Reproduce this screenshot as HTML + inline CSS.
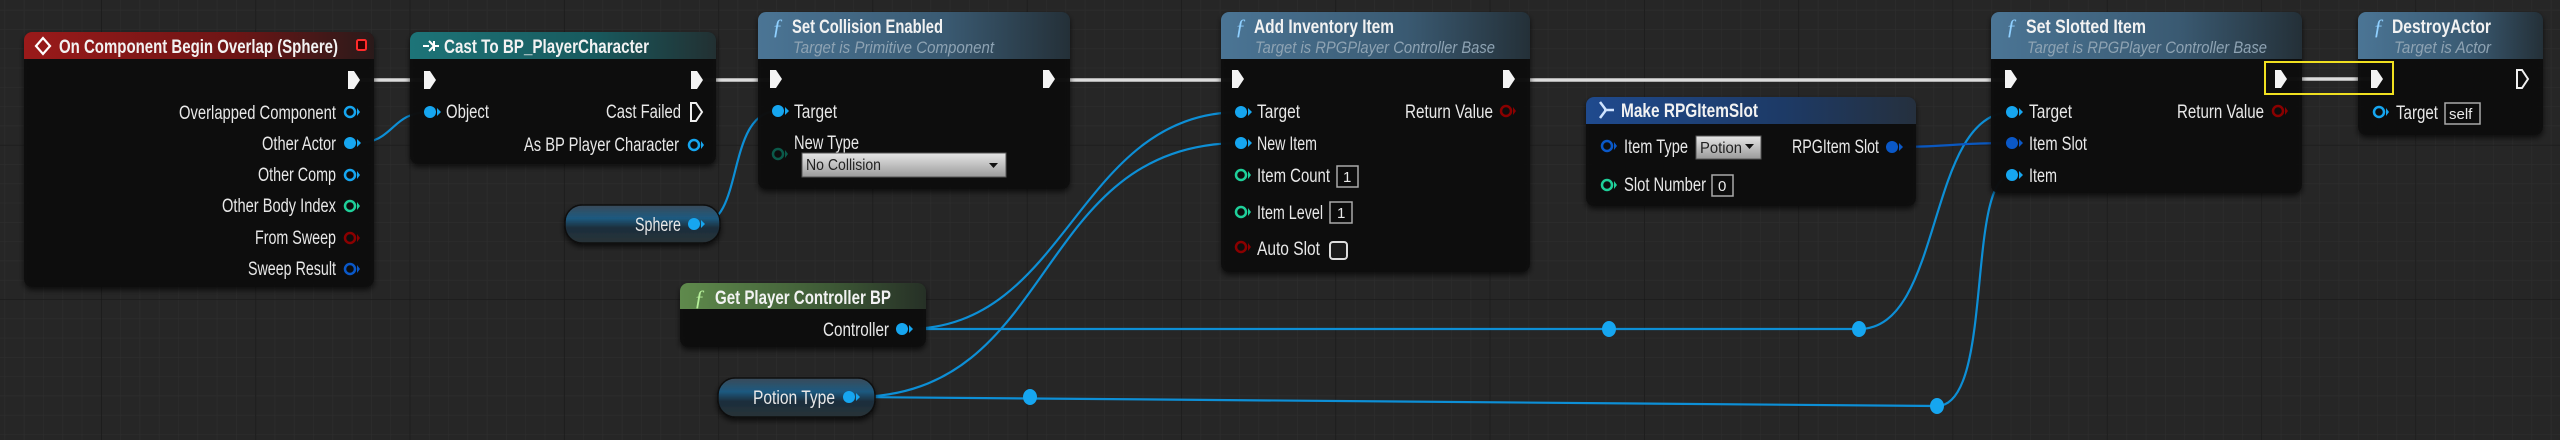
<!DOCTYPE html>
<html><head><meta charset="utf-8"><style>
html,body{margin:0;padding:0;background:#262626;width:2560px;height:440px;overflow:hidden}
svg{display:block}
text{font-family:"Liberation Sans",sans-serif;fill:#e8e8e8}
.t{font-size:19px}
.h{font-size:19px;font-weight:bold;fill:#f2f2f2}
.s{font-size:17px;font-style:italic;fill:#8ea3b3}
</style></head><body>
<svg width="2560" height="440" viewBox="0 0 2560 440" xmlns="http://www.w3.org/2000/svg">
<defs>
<pattern id="minor" x="101" y="-9.5" width="19.29" height="19.29" patternUnits="userSpaceOnUse">
<path d="M0 0V19.29M0 0H19.29" stroke="#2e2e2e" stroke-width="1.2" fill="none"/>
</pattern>
<pattern id="major" x="101" y="-9.5" width="154.3" height="154.3" patternUnits="userSpaceOnUse">
<path d="M0 0V154.3M0 0H154.3" stroke="#191919" stroke-width="1.5" fill="none"/>
</pattern>
<linearGradient id="gRed" x1="0" x2="1"><stop offset="0" stop-color="#9a1a1a"/><stop offset=".6" stop-color="#6e1515"/><stop offset="1" stop-color="#2a1a1a"/></linearGradient>
<linearGradient id="gTeal" x1="0" x2="1"><stop offset="0" stop-color="#1d7478"/><stop offset=".6" stop-color="#185a5e"/><stop offset="1" stop-color="#223032"/></linearGradient>
<linearGradient id="gBlue" x1="0" x2="1"><stop offset="0" stop-color="#4b7595"/><stop offset=".6" stop-color="#3a5a72"/><stop offset="1" stop-color="#243038"/></linearGradient>
<linearGradient id="gGreen" x1="0" x2="1"><stop offset="0" stop-color="#5f8a4c"/><stop offset=".6" stop-color="#3e5a36"/><stop offset="1" stop-color="#263026"/></linearGradient>
<linearGradient id="gNavy" x1="0" x2="1"><stop offset="0" stop-color="#1f4a8e"/><stop offset=".6" stop-color="#1d3a66"/><stop offset="1" stop-color="#25303e"/></linearGradient>
<linearGradient id="gVar" x1="0" x2="0" y1="0" y2="1"><stop offset="0" stop-color="#3a4a58"/><stop offset=".35" stop-color="#1d5a80"/><stop offset=".6" stop-color="#1a2e3c"/><stop offset="1" stop-color="#2a3238"/></linearGradient>
<linearGradient id="gCombo" x1="0" x2="0" y1="0" y2="1"><stop offset="0" stop-color="#e6e6e6"/><stop offset="1" stop-color="#9a9a9a"/></linearGradient>
<filter id="sh" x="-5%" y="-10%" width="110%" height="130%"><feDropShadow dx="0" dy="3" stdDeviation="3" flood-color="#000" flood-opacity=".7"/></filter>
</defs>
<rect width="2560" height="440" fill="#262626"/>
<rect width="2560" height="440" fill="url(#minor)"/>
<rect width="2560" height="440" fill="url(#major)"/>

<g fill="none" stroke-linecap="round">
<path d="M357 80H424M700 80H772M1053 80H1234M1513 80H2006M2285 79H2373" stroke="#dcdcdc" stroke-width="3.5"/>
<g stroke="#0d8fd6" stroke-width="2.2">
<path d="M357 143C395 143 390 112 430 112"/>
<path d="M700 224C745 224 725 111 778 111"/>
<path d="M907 329C1070 329 1075 112 1241 112"/>
<path d="M907 329H1859"/>
<path d="M1859 329C1945 329 1925 112 2012 112"/>
<path d="M854 397C1060 397 1030 143 1241 143"/>
<path d="M854 397L1937 406"/>
<path d="M1937 406C1995 406 1965 175 2012 175"/>
</g>
<path d="M1896 147C1950 147 1950 143 2012 143" stroke="#0a58c0" stroke-width="2.2"/>
</g>
<g fill="#16a6f0">
<ellipse cx="1030" cy="397" rx="7" ry="8"/><ellipse cx="1609" cy="329" rx="7" ry="8"/><ellipse cx="1859" cy="329" rx="7" ry="8"/><ellipse cx="1937" cy="406" rx="7" ry="8"/>
</g>

<g filter="url(#sh)"><rect x="24" y="32" width="350" height="255" rx="8" fill="#121212" fill-opacity=".95"/></g>
<path d="M32 32H366a8 8 0 0 1 8 8V59H24V40a8 8 0 0 1 8-8z" fill="url(#gRed)"/>
<path d="M43 38L36 46L43 54L50 46Z" fill="none" stroke="#fff" stroke-width="2.2"/>
<text class="h" x="59" y="53" textLength="279" lengthAdjust="spacingAndGlyphs">On Component Begin Overlap (Sphere)</text>
<rect x="357" y="40" width="9" height="10" rx="1.5" fill="#300" stroke="#ff2a2a" stroke-width="2"/>
<g class="t" text-anchor="end">
<text x="336" y="119" textLength="157" lengthAdjust="spacingAndGlyphs">Overlapped Component</text>
<text x="336" y="150" textLength="74" lengthAdjust="spacingAndGlyphs">Other Actor</text>
<text x="336" y="181" textLength="78" lengthAdjust="spacingAndGlyphs">Other Comp</text>
<text x="336" y="212" textLength="114" lengthAdjust="spacingAndGlyphs">Other Body Index</text>
<text x="336" y="244" textLength="81" lengthAdjust="spacingAndGlyphs">From Sweep</text>
<text x="336" y="275" textLength="88" lengthAdjust="spacingAndGlyphs">Sweep Result</text>
</g>

<g filter="url(#sh)"><rect x="410" y="32" width="306" height="132" rx="8" fill="#121212" fill-opacity=".95"/></g>
<path d="M418 32H708a8 8 0 0 1 8 8V59H410V40a8 8 0 0 1 8-8z" fill="url(#gTeal)"/>
<path d="M423 46h6M429 41l5 5-5 5M434 41v10M434 46h5" stroke="#fff" stroke-width="2" fill="none"/>
<text class="h" x="444" y="53" textLength="205" lengthAdjust="spacingAndGlyphs">Cast To BP_PlayerCharacter</text>
<text class="t" x="446" y="118" textLength="43" lengthAdjust="spacingAndGlyphs">Object</text>
<text class="t" x="681" y="118" text-anchor="end" textLength="75" lengthAdjust="spacingAndGlyphs">Cast Failed</text>
<text class="t" x="679" y="151" text-anchor="end" textLength="155" lengthAdjust="spacingAndGlyphs">As BP Player Character</text>

<g filter="url(#sh)"><rect x="565" y="205" width="155" height="38" rx="17" fill="url(#gVar)" stroke="#111" stroke-width="1.5"/></g>
<text class="t" x="681" y="231" text-anchor="end" textLength="46" lengthAdjust="spacingAndGlyphs">Sphere</text>

<g filter="url(#sh)"><rect x="758" y="12" width="312" height="177" rx="8" fill="#121212" fill-opacity=".95"/></g>
<path d="M766 12H1062a8 8 0 0 1 8 8V59H758V20a8 8 0 0 1 8-8z" fill="url(#gBlue)"/>
<text x="772" y="34" style="font-family:'Liberation Serif',serif;font-style:italic;font-size:22px;fill:#8fd0ff">ƒ</text>
<text class="h" x="792" y="33" textLength="151" lengthAdjust="spacingAndGlyphs">Set Collision Enabled</text>
<text class="s" x="793" y="53" textLength="201" lengthAdjust="spacingAndGlyphs">Target is Primitive Component</text>
<text class="t" x="794" y="118" textLength="43" lengthAdjust="spacingAndGlyphs">Target</text>
<text class="t" x="794" y="149" textLength="65" lengthAdjust="spacingAndGlyphs">New Type</text>
<rect x="802" y="153" width="204" height="24" fill="url(#gCombo)" stroke="#555"/>
<text x="806" y="170" textLength="75" lengthAdjust="spacingAndGlyphs" style="font-size:16px;fill:#222">No Collision</text>
<path d="M989 163h9l-4.5 5z" fill="#111"/>

<g filter="url(#sh)"><rect x="1221" y="12" width="309" height="260" rx="8" fill="#121212" fill-opacity=".95"/></g>
<path d="M1229 12H1522a8 8 0 0 1 8 8V59H1221V20a8 8 0 0 1 8-8z" fill="url(#gBlue)"/>
<text x="1235" y="34" style="font-family:'Liberation Serif',serif;font-style:italic;font-size:22px;fill:#8fd0ff">ƒ</text>
<text class="h" x="1254" y="33" textLength="140" lengthAdjust="spacingAndGlyphs">Add Inventory Item</text>
<text class="s" x="1255" y="53" textLength="240" lengthAdjust="spacingAndGlyphs">Target is RPGPlayer Controller Base</text>
<text class="t" x="1257" y="118" textLength="43" lengthAdjust="spacingAndGlyphs">Target</text>
<text class="t" x="1493" y="118" text-anchor="end" textLength="88" lengthAdjust="spacingAndGlyphs">Return Value</text>
<text class="t" x="1257" y="150" textLength="60" lengthAdjust="spacingAndGlyphs">New Item</text>
<text class="t" x="1257" y="182" textLength="73" lengthAdjust="spacingAndGlyphs">Item Count</text>
<rect x="1337" y="166" width="21" height="21" fill="#0c0c0c" stroke="#aaa" stroke-width="1.5"/>
<text x="1343" y="182" style="font-size:15px">1</text>
<text class="t" x="1257" y="219" textLength="66" lengthAdjust="spacingAndGlyphs">Item Level</text>
<rect x="1330" y="202" width="22" height="21" fill="#0c0c0c" stroke="#aaa" stroke-width="1.5"/>
<text x="1337" y="218" style="font-size:15px">1</text>
<text class="t" x="1257" y="255" textLength="63" lengthAdjust="spacingAndGlyphs">Auto Slot</text>
<rect x="1330" y="242" width="17" height="17" rx="3" fill="#1a1a1a" stroke="#ddd" stroke-width="2"/>

<g filter="url(#sh)"><rect x="680" y="283" width="246" height="64" rx="8" fill="#121212" fill-opacity=".95"/></g>
<path d="M688 283H918a8 8 0 0 1 8 8V309H680V291a8 8 0 0 1 8-8z" fill="url(#gGreen)"/>
<text x="694" y="305" style="font-family:'Liberation Serif',serif;font-style:italic;font-size:22px;fill:#b6f09a">ƒ</text>
<text class="h" x="715" y="304" textLength="176" lengthAdjust="spacingAndGlyphs">Get Player Controller BP</text>
<text class="t" x="889" y="336" text-anchor="end" textLength="66" lengthAdjust="spacingAndGlyphs">Controller</text>

<g filter="url(#sh)"><rect x="718" y="378" width="157" height="39" rx="17" fill="url(#gVar)" stroke="#111" stroke-width="1.5"/></g>
<text class="t" x="835" y="404" text-anchor="end" textLength="82" lengthAdjust="spacingAndGlyphs">Potion Type</text>

<g filter="url(#sh)"><rect x="1586" y="97" width="330" height="109" rx="8" fill="#121212" fill-opacity=".95"/></g>
<path d="M1594 97H1908a8 8 0 0 1 8 8V124H1586V105a8 8 0 0 1 8-8z" fill="url(#gNavy)"/>
<path d="M1600 102l6 8-6 8M1604 110h10" stroke="#cfe4ff" stroke-width="2.5" fill="none"/>
<text class="h" x="1621" y="117" textLength="137" lengthAdjust="spacingAndGlyphs">Make RPGItemSlot</text>
<text class="t" x="1624" y="153" textLength="64" lengthAdjust="spacingAndGlyphs">Item Type</text>
<rect x="1696" y="136" width="65" height="23" fill="url(#gCombo)" stroke="#555"/>
<text x="1700" y="153" textLength="42" lengthAdjust="spacingAndGlyphs" style="font-size:16px;fill:#222">Potion</text>
<path d="M1745 144h9l-4.5 5z" fill="#111"/>
<text class="t" x="1879" y="153" text-anchor="end" textLength="87" lengthAdjust="spacingAndGlyphs">RPGItem Slot</text>
<text class="t" x="1624" y="191" textLength="82" lengthAdjust="spacingAndGlyphs">Slot Number</text>
<rect x="1712" y="175" width="21" height="21" fill="#0c0c0c" stroke="#aaa" stroke-width="1.5"/>
<text x="1718" y="191" style="font-size:15px">0</text>

<g filter="url(#sh)"><rect x="1991" y="12" width="311" height="181" rx="8" fill="#121212" fill-opacity=".95"/></g>
<path d="M1999 12H2294a8 8 0 0 1 8 8V59H1991V20a8 8 0 0 1 8-8z" fill="url(#gBlue)"/>
<text x="2006" y="34" style="font-family:'Liberation Serif',serif;font-style:italic;font-size:22px;fill:#8fd0ff">ƒ</text>
<text class="h" x="2026" y="33" textLength="120" lengthAdjust="spacingAndGlyphs">Set Slotted Item</text>
<text class="s" x="2027" y="53" textLength="240" lengthAdjust="spacingAndGlyphs">Target is RPGPlayer Controller Base</text>
<text class="t" x="2029" y="118" textLength="43" lengthAdjust="spacingAndGlyphs">Target</text>
<text class="t" x="2264" y="118" text-anchor="end" textLength="87" lengthAdjust="spacingAndGlyphs">Return Value</text>
<text class="t" x="2029" y="150" textLength="58" lengthAdjust="spacingAndGlyphs">Item Slot</text>
<text class="t" x="2029" y="182" textLength="28" lengthAdjust="spacingAndGlyphs">Item</text>

<g filter="url(#sh)"><rect x="2358" y="12" width="185" height="123" rx="8" fill="#121212" fill-opacity=".95"/></g>
<path d="M2366 12H2535a8 8 0 0 1 8 8V59H2358V20a8 8 0 0 1 8-8z" fill="url(#gBlue)"/>
<text x="2373" y="34" style="font-family:'Liberation Serif',serif;font-style:italic;font-size:22px;fill:#8fd0ff">ƒ</text>
<text class="h" x="2392" y="33" textLength="99" lengthAdjust="spacingAndGlyphs">DestroyActor</text>
<text class="s" x="2394" y="53" textLength="97" lengthAdjust="spacingAndGlyphs">Target is Actor</text>
<text class="t" x="2396" y="119" textLength="42" lengthAdjust="spacingAndGlyphs">Target</text>
<rect x="2445" y="103" width="35" height="21" fill="#0c0c0c" stroke="#aaa" stroke-width="1.5"/>
<text x="2449" y="119" style="font-size:15px">self</text>

<rect x="2265" y="62" width="128" height="32" fill="none" stroke="#f0e020" stroke-width="2"/>

<g fill="#f4f4f4">
<path id="ex" d="M-6 -9h6l6 9l-6 9h-6z" transform="translate(354 80)"/>
<use href="#ex" transform="translate(76 0)"/>
<use href="#ex" transform="translate(343 0)"/>
<use href="#ex" transform="translate(422 -1)"/>
<use href="#ex" transform="translate(695 -1)"/>
<use href="#ex" transform="translate(884 -1)"/>
<use href="#ex" transform="translate(1155 -1)"/>
<use href="#ex" transform="translate(1657 -1)"/>
<use href="#ex" transform="translate(1927 -1)"/>
<use href="#ex" transform="translate(2023 -1)"/>
</g>
<g fill="none" stroke="#f0f0f0" stroke-width="2">
<path d="M691 103h5l6 9l-6 9h-5z"/>
<path d="M2517 70h5l6 9l-6 9h-5z"/>
</g>

<g>
<g fill="#16a6f0">
<circle cx="350" cy="143" r="6"/><path d="M357 139l4 4-4 4z"/>
<circle cx="430" cy="112" r="6"/><path d="M437 108l4 4-4 4z"/>
<circle cx="694" cy="224" r="6"/><path d="M701 220l4 4-4 4z"/>
<circle cx="778" cy="111" r="6"/><path d="M785 107l4 4-4 4z"/>
<circle cx="1241" cy="112" r="6"/><path d="M1248 108l4 4-4 4z"/>
<circle cx="1241" cy="143" r="6"/><path d="M1248 139l4 4-4 4z"/>
<circle cx="902" cy="329" r="6"/><path d="M909 325l4 4-4 4z"/>
<circle cx="849" cy="397" r="6"/><path d="M856 393l4 4-4 4z"/>
<circle cx="2012" cy="112" r="6"/><path d="M2019 108l4 4-4 4z"/>
<circle cx="2012" cy="175" r="6"/><path d="M2019 171l4 4-4 4z"/>
</g>
<g fill="#0a58c8">
<circle cx="1892" cy="147" r="6"/><path d="M1899 143l4 4-4 4z"/>
<circle cx="2012" cy="143" r="6"/><path d="M2019 139l4 4-4 4z"/>
</g>
<g fill="none" stroke-width="2.5">
<circle cx="350" cy="112" r="5" stroke="#16a6f0"/>
<circle cx="350" cy="175" r="5" stroke="#16a6f0"/>
<circle cx="350" cy="206" r="5" stroke="#1fd09a"/>
<circle cx="350" cy="238" r="5" stroke="#8a0000"/>
<circle cx="350" cy="269" r="5" stroke="#0a58c8"/>
<circle cx="694" cy="145" r="5" stroke="#16a6f0"/>
<circle cx="778" cy="154" r="5" stroke="#0b5a4a"/>
<circle cx="1506" cy="111" r="5" stroke="#8a0000"/>
<circle cx="1241" cy="175" r="5" stroke="#1fd09a"/>
<circle cx="1241" cy="212" r="5" stroke="#1fd09a"/>
<circle cx="1241" cy="247" r="5" stroke="#8a0000"/>
<circle cx="1607" cy="146" r="5" stroke="#0a58c8"/>
<circle cx="1607" cy="185" r="5" stroke="#1fd09a"/>
<circle cx="2278" cy="111" r="5" stroke="#8a0000"/>
<circle cx="2379" cy="112" r="5" stroke="#16a6f0"/>
</g>
<g>
<path d="M357 108l3 4-3 4z M357 171l3 4-3 4z M701 141l3 4-3 4z M2386 108l3 4-3 4z" fill="#16a6f0"/>
<path d="M357 202l3 4-3 4z M1248 171l3 4-3 4z M1248 208l3 4-3 4z M1614 181l3 4-3 4z" fill="#1fd09a"/>
<path d="M357 234l3 4-3 4z M1513 107l3 4-3 4z M1248 243l3 4-3 4z M2285 107l3 4-3 4z" fill="#8a0000"/>
<path d="M357 265l3 4-3 4z M1614 142l3 4-3 4z" fill="#0a58c8"/>
<path d="M785 150l3 4-3 4z" fill="#0b5a4a"/>
</g>
</g>
</svg>
</body></html>
